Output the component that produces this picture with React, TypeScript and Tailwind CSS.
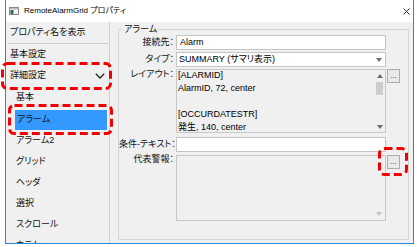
import { ReactNode } from "react";

function DotsButton() {
  return (
    <div className="ml-px flex h-[14px] w-[13px] items-center justify-center border border-[#adadad] bg-[#e9e9e9] text-[8px] leading-none text-[#333]">
      ...
    </div>
  );
}

function Label({ children, className = "" }: { children: ReactNode; className?: string }) {
  return <div className={`w-[57px] shrink-0 pr-[2px] text-right whitespace-nowrap ${className}`}>{children}</div>;
}

function Tri({ up = false, color = "#6d6d6d" }: { up?: boolean; color?: string }) {
  return (
    <svg width="6" height="4" viewBox="0 0 6 4">
      <polygon points={up ? "0,4 6,4 3,0" : "0,0 6,0 3,4"} fill={color} />
    </svg>
  );
}

// red dashed annotation drawn on top of the screenshot
function Mark({ className, w, h }: { className: string; w: number; h: number }) {
  return (
    <svg className={`absolute ${className}`} width={w} height={h} viewBox={`0 0 ${w} ${h}`}>
      <rect x="1.5" y="1.5" width={w - 3} height={h - 3} rx="5" fill="none" stroke="#f00000" strokeWidth="3" strokeDasharray="8 4" />
    </svg>
  );
}

const subItems = ["アラーム2", "グリッド", "ヘッダ", "選択", "スクロール", "カラム"];

export default function App() {
  return (
    <div className="relative h-[247px] w-[417px] overflow-hidden bg-white font-['Liberation_Sans','Noto_Sans_CJK_JP',sans-serif] text-[9px] text-[#111] [font-feature-settings:'palt']">
      {/* window */}
      <div className="ml-[5px] flex h-[244px] w-[409px] flex-col border-x border-b border-[#2b88d8] bg-[#f0f0f0]">
        {/* title bar */}
        <div className="flex h-[22px] shrink-0 items-center bg-white pl-[3px] pr-[3px]">
          <svg width="10" height="8" viewBox="0 0 10 8">
            <rect x="0.5" y="0.5" width="9" height="7" fill="#f4f4f4" stroke="#8a8a8a" />
            <rect x="1" y="1" width="8" height="1.5" fill="#bdbdbd" />
            <rect x="1.5" y="3" width="3" height="4" fill="#2f6b55" />
          </svg>
          <span className="ml-[5px] text-[8px] text-black">RemoteAlarmGrid プロパティ</span>
          <svg className="ml-auto" width="7" height="7" viewBox="0 0 7 7">
            <path d="M0.5 0.5 L6.5 6.5 M6.5 0.5 L0.5 6.5" stroke="#222" strokeWidth="0.9" />
          </svg>
        </div>

        <div className="flex min-h-0 flex-1">
          {/* left panel */}
          <div className="flex w-[104px] shrink-0 flex-col overflow-hidden border-r border-[#cfcfcf]">
            <div className="flex h-[21px] shrink-0 items-center pl-[4px]">プロパティ名を表示</div>
            <div className="ml-[2px] mr-px h-px shrink-0 bg-[#cdcdcd]" />
            <div className="flex h-[21px] shrink-0 items-center pl-[4px]">基本設定</div>
            <div className="flex h-[22px] shrink-0 items-center justify-between pl-[4px] pr-[4px]">
              <span>詳細設定</span>
              <svg width="10" height="6" viewBox="0 0 10 6">
                <polyline points="0.8,0.8 5,5 9.2,0.8" fill="none" stroke="#222" strokeWidth="1.3" />
              </svg>
            </div>
            <div className="flex h-[22px] shrink-0 items-center pl-[10px]">基本</div>
            <div className="ml-[9px] mr-[2px] mt-px flex h-[20px] shrink-0 items-center bg-[#3399ff] pl-[2px]">アラーム</div>
            {subItems.map((s) => (
              <div key={s} className="flex h-[21px] shrink-0 items-center pl-[10px]">
                {s}
              </div>
            ))}
          </div>

          {/* right panel */}
          <div className="flex min-w-0 flex-1 flex-col pb-[3px] pl-[8px] pr-[4px] pt-[2px]">
            <fieldset className="min-w-0 flex-1 border border-[#d6d6d6]">
              <legend className="ml-[4px] px-px leading-[11px]">アラーム</legend>

              <div className="flex items-start">
                <Label className="leading-[15px]">接続先：</Label>
                <div className="flex h-[15px] w-[210px] items-center border border-[#c5c5c5] bg-white pl-[3px] text-black">Alarm</div>
              </div>

              <div className="mt-[2px] flex items-start">
                <Label className="leading-[15px]">タイプ：</Label>
                <div className="flex h-[15px] w-[210px] items-center justify-between border border-[#c5c5c5] bg-white pl-[2px] pr-[3px] text-black">
                  <span>SUMMARY (サマリ表示)</span>
                  <Tri />
                </div>
              </div>

              <div className="mt-[2px] flex items-start">
                <Label className="leading-[11px]">レイアウト：</Label>
                <div className="flex h-[64px] w-[210px] overflow-hidden border border-[#c8c8c8] bg-[#f0f0f0]">
                  <div className="-mt-px flex-1 pl-px leading-[13px] text-black">
                    <div>[ALARMID]</div>
                    <div>AlarmID, 72, center</div>
                    <div>&nbsp;</div>
                    <div>[OCCURDATESTR]</div>
                    <div>発生, 140, center</div>
                  </div>
                  <div className="mr-px flex w-[9px] flex-col items-center pt-[4px]">
                    <Tri up />
                    <div className="mt-[4px] h-[13px] w-[7px] bg-[#cdcdcd]" />
                    <div className="mt-auto mb-[3px]">
                      <Tri />
                    </div>
                  </div>
                </div>
                <DotsButton />
              </div>

              <div className="mt-[4px] flex items-start">
                <Label className="leading-[15px]">条件-テキスト：</Label>
                <div className="h-[15px] w-[210px] border border-[#c5c5c5] bg-white" />
              </div>

              <div className="mt-[3px] flex items-start">
                <Label className="leading-[9px]">代表警報：</Label>
                <div className="flex h-[66px] w-[210px] flex-col items-end border border-[#c8c8c8] bg-[#f0f0f0] pb-[4px] pr-[3px]">
                  <div className="mt-auto">
                    <Tri color="#c4c4c4" />
                  </div>
                </div>
                <DotsButton />
              </div>
            </fieldset>
          </div>
        </div>
      </div>

      {/* annotation boxes */}
      <Mark className="left-[1px] top-[62px]" w={111} h={28} />
      <Mark className="left-[8px] top-[104px]" w={105} h={31} />
      <Mark className="left-[378px] top-[147px]" w={30} h={29} />
    </div>
  );
}
